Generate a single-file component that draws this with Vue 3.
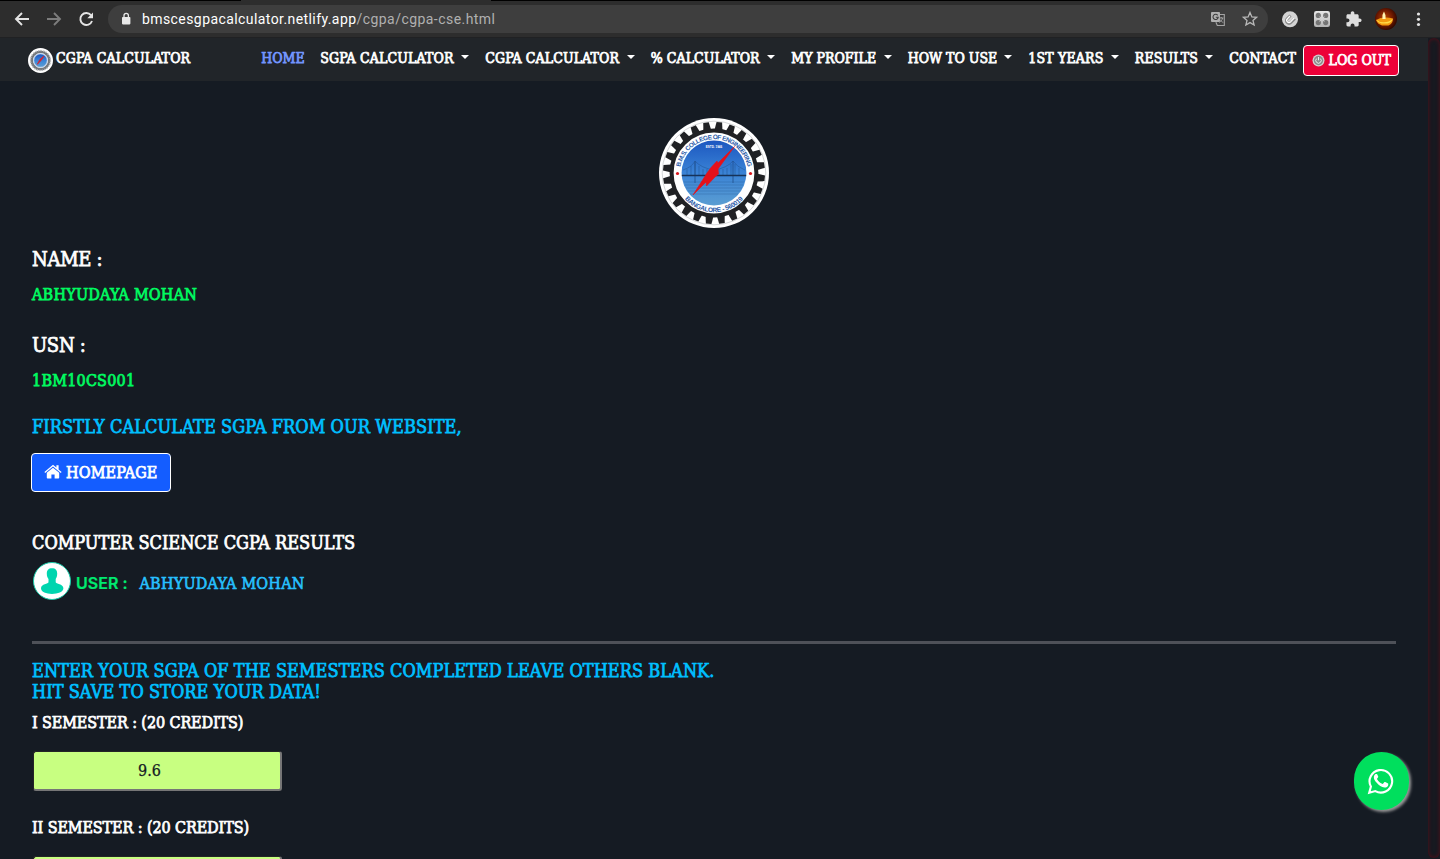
<script setup>
const menu = [
  { label: 'HOME', width: 43, active: true },
  { label: 'SGPA CALCULATOR', width: 149, spacing: 0.14, caret: true },
  { label: 'CGPA CALCULATOR', width: 149.5, spacing: 0.1, caret: true },
  { label: '% CALCULATOR', width: 124.5, spacing: 0.05, caret: true },
  { label: 'MY PROFILE', width: 100.5, spacing: 0, caret: true },
  { label: 'HOW TO USE', width: 104.5, spacing: 0, caret: true },
  { label: '1ST YEARS', width: 90.5, spacing: 0.16, caret: true },
  { label: 'RESULTS', width: 78.5, spacing: 0.14, caret: true },
  { label: 'CONTACT', width: 67, spacing: 0.16 },
]
const teeth = Array.from({ length: 24 }, (_, i) => i * 15 + 6)
const cables = [-27, -23, -19, -15, -11, -7, -3, 1, 5, 9, 13, 17, 21, 25]
</script>

<template>
  <div class="screen">
    <svg width="0" height="0" class="defs">
      <defs>
        <linearGradient id="sky" x1="0" y1="0" x2="0" y2="1">
          <stop offset="0" stop-color="#1c57c0" />
          <stop offset="0.5" stop-color="#3a83d6" />
          <stop offset="1" stop-color="#5a9dd2" />
        </linearGradient>
        <radialGradient id="flame" cx="0.45" cy="0.45" r="0.6">
          <stop offset="0" stop-color="#b84400" />
          <stop offset="0.6" stop-color="#6c1800" />
          <stop offset="1" stop-color="#240500" />
        </radialGradient>
        <linearGradient id="silver" x1="0" y1="0" x2="0" y2="1">
          <stop offset="0" stop-color="#e8e8e8" />
          <stop offset="1" stop-color="#b4b4b4" />
        </linearGradient>
      </defs>
    </svg>

    <header class="chrome">
      <svg class="nav-icons" width="108" height="38" fill="none" stroke="#e4e4e4" stroke-width="1.9">
        <path d="M29 19H16.5M22 13L16 19l6 6" />
        <path d="M47 19h12.5M54 13l6 6-6 6" stroke="#7c7c7c" />
        <path d="M91 15.2A6 6 0 1 0 92 21" />
        <path d="M93 12.5v5.7h-5.7z" fill="#e4e4e4" stroke="none" />
      </svg>
      <div class="omnibox">
        <svg width="12" height="14" viewBox="0 0 12 14">
          <rect x="2" y="5" width="8.4" height="7.4" rx="0.8" fill="#e8e8e8" />
          <path d="M4 5.5V3.6a2.2 2.2 0 0 1 4.4 0v1.9" fill="none" stroke="#e8e8e8" stroke-width="1.3" />
        </svg>
        <span class="url"><span class="host">bmscesgpacalculator.netlify.app</span>/cgpa/cgpa-cse.html</span>
        <svg class="tools" width="50" height="18" viewBox="1210 10 50 18">
          <rect x="1211" y="12" width="9" height="10" rx="1" fill="#b0b0b0" />
          <path d="M1217.7 15.3a2.6 2.6 0 1 0 .5 2h-2.4" fill="none" stroke="#3d3d3d" stroke-width="1.1" />
          <path d="M1220 14.5h4.3v11h-7l-1.4-3.3" fill="none" stroke="#a4a4a4" stroke-width="1.1" />
          <path d="M1218.9 18h4.5M1221.2 17v1M1222.6 18c-.4 2-1.7 3.4-3.3 4.4M1219.8 19.4l3.2 3.3" fill="none" stroke="#a4a4a4" />
          <path d="M1250 12.5l1.9 4.4 4.7.4-3.6 3.1 1.1 4.6-4.1-2.4-4.1 2.4 1.1-4.6-3.6-3.1 4.7-.4z" fill="none" stroke="#b8b8b8" stroke-width="1.3" />
        </svg>
      </div>
      <svg class="extensions" width="172" height="38" viewBox="1268 0 172 38">
        <circle cx="1290" cy="19.3" r="8" fill="#d4d4d4" />
        <path d="M1290.5 15.5l-3.3 3.3a2.6 2.6 0 0 0 3.7 3.7l4-4" fill="none" stroke="#8b8b8b" stroke-width="3" />
        <path d="M1290 16l-2.6 2.7a2.2 2.2 0 0 0 3.2 3.2l3.8-4" fill="none" stroke="#fff" stroke-width="1.3" />
        <rect x="1314" y="11" width="16" height="16" rx="2.3" fill="url(#silver)" />
        <g fill="#757575">
          <circle cx="1318.3" cy="15.4" r="2.6" /><circle cx="1325.7" cy="15.4" r="2.6" />
          <circle cx="1318.3" cy="22.6" r="2.6" /><circle cx="1325.7" cy="22.6" r="2.6" />
        </g>
        <path d="M1319.5 16.8l5 4.5M1324.5 16.8l-5 4.5" stroke="#d2d2d2" stroke-width="1" />
        <path
          transform="translate(1345 10.6) scale(.72)" fill="#dedede"
          d="M20.5 11H19V7c0-1.1-.9-2-2-2h-4V3.5C13 2.12 11.88 1 10.5 1S8 2.12 8 3.5V5H4c-1.1 0-1.99.9-1.99 2v3.8H3.5c1.49 0 2.7 1.21 2.7 2.7s-1.21 2.7-2.7 2.7H2V20c0 1.1.9 2 2 2h3.8v-1.5c0-1.49 1.21-2.7 2.7-2.7s2.7 1.21 2.7 2.7V22H17c1.1 0 2-.9 2-2v-4h1.5c1.38 0 2.5-1.12 2.5-2.5S21.88 11 20.5 11z"
        />
        <circle cx="1386" cy="19" r="11" fill="url(#flame)" />
        <path d="M1376 20q7-4 17-1.500 0 5-4.500 7h-6.500q-4.500-1.500-6-5.500z" fill="#f29a10" />
        <path d="M1376 19.5q3 3 8 2.800 5 0 8.500-3.300-.5 3-5 4.500h-6q-4-1.200-5.500-4z" fill="#ffdc48" />
        <path d="M1384 11.5q2.200 3.500 1.600 7.500h-3.200q-.8-4 1.600-7.500z" fill="#fff4b0" />
        <g fill="#e4e4e4">
          <circle cx="1418.5" cy="14" r="1.6" /><circle cx="1418.5" cy="19.3" r="1.6" /><circle cx="1418.5" cy="24.5" r="1.6" />
        </g>
      </svg>
    </header>

    <div class="viewport">
      <div class="page">
        <nav class="navbar">
          <a class="brand">
            <svg width="25" height="25" viewBox="-12.5 -12.5 25 25">
              <circle r="12.5" fill="#fff" />
              <circle r="8.800" fill="none" stroke="#74787c" stroke-width="2.600" />
              <circle r="10" fill="none" stroke="#b9bbbd" stroke-width="1.4" stroke-dasharray="1.3 1.3" />
              <circle r="7.300" fill="#b8cdeb" />
              <circle r="6.300" fill="url(#sky)" />
              <path d="M3.5-4.500L.8-.2-3.200 3.700-.6-1z" fill="#d9232d" stroke="#d9232d" stroke-width=".8" />
            </svg>CGPA CALCULATOR
          </a>
          <ul class="menu">
            <li
              v-for="m in menu" :key="m.label" :class="{ active: m.active }"
              :style="{ width: m.width + 'px', letterSpacing: (m.spacing || 0) + 'px' }"
            >
              {{ m.label }}<i v-if="m.caret" class="caret" />
            </li>
          </ul>
          <button class="logout">
            <svg width="13" height="13" viewBox="0 0 13 13">
              <circle cx="6.5" cy="6.5" r="6" fill="#d5cfd1" />
              <circle cx="6.5" cy="6.5" r="4.7" fill="#8d8d8d" />
              <path d="M4.6 4.6a2.7 2.7 0 1 0 3.8 0M6.5 3v3.3" fill="none" stroke="#eee" stroke-width="1" />
            </svg>LOG OUT
          </button>
        </nav>

        <main class="content">
          <svg class="crest" width="110" height="110" viewBox="-55 -55 110 110">
            <circle r="55" fill="#fff" />
            <circle r="51.8" fill="none" stroke="#b9bcc0" stroke-width="0.6" />
            <circle r="42.4" fill="none" stroke="#202124" stroke-width="4" />
            <path
              v-for="a in teeth" :key="a" d="M-3.900-43.500L-2.800-51H2.800L3.900-43.500Z" fill="#202124"
              :transform="`rotate(${a})`"
            />
            <circle r="32.4" fill="url(#sky)" />
            <g stroke="#1f4c86" stroke-width="0.5" fill="none" opacity="0.85">
              <path d="M-31-3Q-22-6-19-12Q-13-5 0-3Q13-5 19-12Q23-6 31-3" />
              <path v-for="x in cables" :key="x" :d="`M${x} ${-4 - Math.max(0, 7 - Math.abs(Math.abs(x) - 19))}V2`" />
              <path d="M-19-12V10M19-12V10" stroke-width="0.9" />
              <path d="M-30 9H30M-29 12H29M-28 15H28M-26 18H26M-24 21H24" opacity="0.6" />
            </g>
            <path d="M-32.2 2.500H32.2" stroke="#163258" stroke-width="1.6" />
            <path d="M20.5-26.500L4-10 3-12-3-5.500-7 0-21 22-8 9-7.500 13 1 4 4.500 1 4-4Z" fill="#e5101a" stroke="#e5101a" stroke-width="0.600" />
            <circle cx="-36.5" cy="0.5" r="1.6" fill="#d9161c" />
            <circle cx="36.5" cy="0.5" r="1.6" fill="#d9161c" />
            <path id="arc-top" d="M-33.600 -6A34.200 34.200 0 0 1 33.600 -6" fill="none" />
            <path id="arc-bottom" d="M-38.100 9.500A39.300 39.300 0 0 0 38.100 9.500" fill="none" />
            <g class="crest-text" text-anchor="middle">
              <text font-size="6.4"><textPath href="#arc-top" startOffset="50%" textLength="94">B.M.S. COLLEGE OF ENGINEERING</textPath></text>
              <text font-size="6.6"><textPath href="#arc-bottom" startOffset="50%" textLength="66">BANGALORE - 560019</textPath></text>
              <text font-size="3" y="-25" fill="#fff">ESTD. 1946</text>
            </g>
          </svg>

          <h2 class="name">NAME :</h2>
          <p class="value">ABHYUDAYA MOHAN</p>
          <h2 class="usn">USN :</h2>
          <p class="value">1BM10CS001</p>
          <h3 class="notice first">FIRSTLY CALCULATE SGPA FROM OUR WEBSITE,</h3>
          <button class="homepage">
            <svg width="18" height="16" viewBox="0 0 18 16" fill="#fff">
              <path d="M9 3.700L2.800 8.800v4.900c0 .4.300.7.700.7h3.900v-4h3.200v4h3.900c.4 0 .7-.3.700-.7V8.800z" />
              <path d="M9 .8L.4 7.900l.8 1L9 2.500l7.800 6.400.8-1-3-2.500V1.200h-2.200v2.400z" />
            </svg>HOMEPAGE
          </button>
          <h3 class="results">COMPUTER SCIENCE CGPA RESULTS</h3>
          <div class="user">
            <svg width="40" height="40" viewBox="0 0 40 40">
              <circle cx="20" cy="20" r="18.5" fill="#fff" stroke="#19c9a8" stroke-width="1" />
              <path d="M20 7.300c3.600 0 5.200 2 5.200 5.300 0 3-.8 4.300-1.500 5.500v3.100c0 1.500 7.700 1.500 7.700 6.100 0 3.600-5.700 5.700-11.400 5.700s-11-2.100-11-5.700c0-4.600 7.500-4.600 7.500-6.100v-3.100c-.8-1.200-1.700-2.500-1.700-5.500 0-3.300 1.600-5.300 5.200-5.300z" fill="#00d5af" />
            </svg>
            <span class="user-label">USER :</span>
            <span class="user-name">ABHYUDAYA MOHAN</span>
          </div>
          <hr />
          <h3 class="notice">ENTER YOUR SGPA OF THE SEMESTERS COMPLETED LEAVE OTHERS BLANK.<br />HIT SAVE TO STORE YOUR DATA!</h3>
          <label>I SEMESTER : (20 CREDITS)</label>
          <div class="field">9.6</div>
          <label class="second">II SEMESTER : (20 CREDITS)</label>
          <div class="field" />
        </main>
      </div>
      <div class="scrollbar"><div class="thumb" /></div>
      <div class="whatsapp">
        <svg width="28" height="28" viewBox="0 0 28 28" fill="none">
          <path d="M2.200 25.800l1.700-6.200a11.300 11.300 0 1 1 4.400 4.500z" stroke="#fff" stroke-width="2.1" />
          <path d="M10.300 7.600c-.3-.6-.5-.6-.9-.6-.6 0-1 .1-1.400.6-.6.7-1.300 1.600-1.100 3.300.2 1.500 1.200 3 2.600 4.700 2.300 2.700 5.200 4.700 8 4.900 1.700.1 3.300-.9 3.600-2.100.3-1 .2-1.700 0-1.800l-2.900-1.500c-.5-.2-.8-.1-1.100.3l-1.100 1.300c-.2.3-.5.3-.9.1-2.200-1-3.700-2.300-5-4.500-.2-.4-.1-.6.1-.9l.9-1.100c.2-.3.2-.6.1-.9z" fill="#fff" />
        </svg>
      </div>
    </div>
  </div>
</template>

<style>
body {
  overflow: hidden;
  background: #151b23;
}
</style>

<style scoped>
.screen {
  position: relative;
  width: 1440px;
  height: 859px;
  overflow: hidden;
  background: #151b23;
  font-family: "DejaVu Serif Condensed", "DejaVu Serif", serif;
  color: #fff;
  -webkit-text-stroke: 0.75px currentColor;
}
svg { display: block; flex: none; }
svg text { -webkit-text-stroke: 0; }
.crest-text {
  fill: #2859a8;
  font-family: "Liberation Sans", sans-serif;
  font-weight: 700;
}
.defs { position: absolute; }
.chrome {
  display: flex;
  align-items: center;
  height: 38px;
  box-sizing: border-box;
  background: linear-gradient(90deg, #000 241px, #2d2d2d 241px 491px, #000 491px) 0 0 / 100% 1px no-repeat, #2d2d2d;
  border-bottom: 1px solid #202123;
}
.omnibox {
  display: flex;
  align-items: center;
  width: 1160px;
  height: 28px;
  padding: 0 8px 0 12px;
  box-sizing: border-box;
  border-radius: 14px;
  background: #3e3e3e;
}
.url {
  flex: 1;
  padding-left: 10px;
  font: 14px/18px Roboto, sans-serif;
  letter-spacing: 0.45px;
  color: #b0b0b0;
  -webkit-text-stroke: 0;
}
.host { color: #fff; letter-spacing: 0.42px; }
.viewport { position: relative; display: flex; height: 821px; }
.page { width: 1428px; }
.navbar {
  display: flex;
  height: 43px;
  background: #212529;
  font-size: 14px;
  line-height: 20px;
}
.brand {
  display: flex;
  gap: 3px;
  width: 261.3px;
  padding: 10px 0 0 28px;
  box-sizing: border-box;
  letter-spacing: 0.13px;
}
.menu {
  display: flex;
  gap: 16px;
  margin: 0;
  padding: 10px 0 0;
  list-style: none;
}
.menu li { display: flex; white-space: nowrap; }
.menu .active { color: #7396ff; }
.caret {
  width: 0;
  height: 0;
  margin: 7px 0 0 auto;
  border: 4px solid transparent;
  border-top-color: #fff;
  border-bottom: 0;
}
.logout {
  display: flex;
  align-items: center;
  gap: 3px;
  width: 96px;
  height: 31px;
  margin: 7px 0 0 7.2px;
  padding: 0 0 1px 8px;
  border: 1px solid #fff;
  border-radius: 4px;
  background: #ed0038;
  color: #fff;
  font: inherit;
  font-size: 14.1px;
  white-space: nowrap;
  -webkit-text-stroke: 0.75px #fff;
}
.content { padding: 37px 32px 0; }
.crest { margin: 0 auto 21px; }
h2, h3, p { margin: 0; font-weight: 400; white-space: nowrap; }
h2 { font-size: 20px; line-height: 20px; letter-spacing: -0.3px; }
h3 { font-size: 18px; line-height: 20px; }
.value {
  margin-top: 16px;
  font-size: 16px;
  line-height: 20px;
  letter-spacing: 0.22px;
  color: #00fa60;
}
.usn { margin-top: 30px; }
.notice { line-height: 21px; letter-spacing: 0.06px; color: #00bfff; }
.first { margin-top: 25px; letter-spacing: 0.1px; }
.homepage {
  display: flex;
  align-items: center;
  gap: 4px;
  width: 140px;
  height: 39px;
  margin: 16px 0 41px -1px;
  padding: 0 0 0 12px;
  border: 1px solid #fff;
  border-radius: 4px;
  background: #145dff;
  color: #fff;
  font: inherit;
  font-size: 16px;
  letter-spacing: 0.16px;
  -webkit-text-stroke: 0.75px #fff;
}
.homepage svg { margin-top: -2px; }
.user {
  display: flex;
  align-items: center;
  height: 40px;
  margin-top: 8px;
  font-size: 16px;
  line-height: 20px;
}
.user-label {
  width: 64px;
  padding: 4px 0 0 4px;
  font: 600 16px/20px Inter, sans-serif;
  letter-spacing: 0.05px;
  box-sizing: border-box;
  width: 67.5px;
  color: #00ea70;
  -webkit-text-stroke: 0.2px currentColor;
}
.user-name { padding-top: 5px; letter-spacing: 0.22px; color: #27c0ff; -webkit-text-stroke-width: 0.6px; }
hr { height: 3px; margin: 40px 0 16px; border: 0; background: #4e5158; }
label {
  display: block;
  margin-top: 11px;
  font-size: 16px;
  line-height: 20px;
  letter-spacing: -0.1px;
}
.second { margin-top: 27px; }
.field {
  width: 249px;
  height: 40px;
  margin: 18px 0 0 1px;
  padding-right: 15px;
  box-sizing: border-box;
  border: 2px solid;
  border-width: 1px 2px 2px 1px;
  border-color: #242426 #767676 #767676 #242426;
  border-radius: 3px;
  background: #c8ff81;
  color: #151b23;
  font-size: 16px;
  line-height: 37px;
  text-align: center;
  -webkit-text-stroke: 0.25px #151b23;
}
.scrollbar { width: 12px; background: #181a21; }
.thumb {
  height: 820px;
  box-sizing: border-box;
  border-radius: 7px;
  background: #171920;
  box-shadow: inset 0 0 4px #5a0d17;
}
.whatsapp {
  position: absolute;
  left: 1354px;
  top: 714px;
  display: flex;
  align-items: center;
  justify-content: center;
  width: 54.5px;
  height: 57.5px;
  border-radius: 28px;
  background: #00df5d;
  box-shadow: 2px 2px 3px #999;
}
.whatsapp svg { margin-top: 1px; }
</style>
